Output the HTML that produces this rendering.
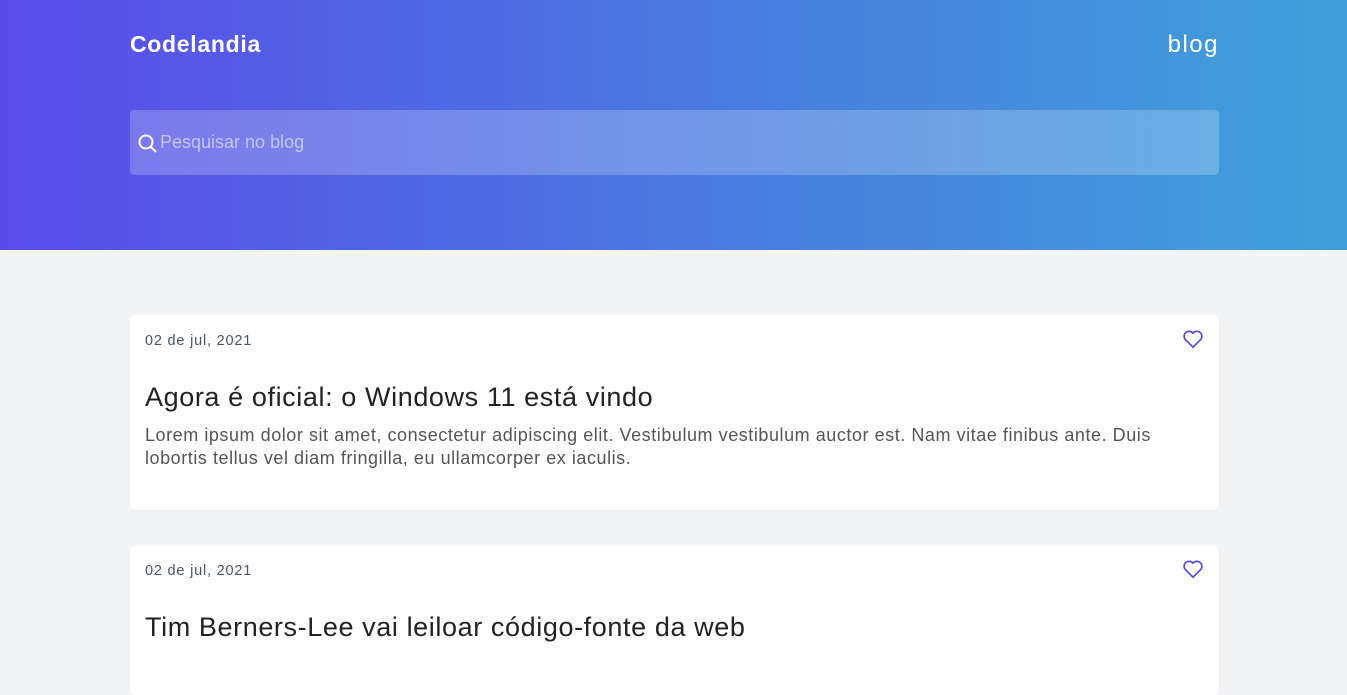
<!DOCTYPE html>
<html><head><meta charset="utf-8"><style>
*{margin:0;padding:0;box-sizing:border-box}
body{width:1347px;height:656px;overflow:hidden;background:#f3f4f6;font-family:"Liberation Sans",sans-serif}
header{height:250px;background:linear-gradient(90deg,#5a4be9,#4a78e0 50%,#3fa0d9);position:relative}
.logo{position:absolute;left:130px;top:31px;color:#fff;font-size:23px;font-weight:bold;letter-spacing:0.7px}
.nav{position:absolute;right:128px;top:31px;color:#fff;font-size:24px;letter-spacing:1.5px}
.search{position:absolute;left:130px;top:110px;width:1089px;height:65px;background:rgba(255,255,255,0.22);border-radius:4px}
.search svg{position:absolute;left:7px;top:23px}
.search span{position:absolute;left:30px;top:22px;color:rgba(255,255,255,0.55);font-size:18px}
.card{position:absolute;left:130px;width:1089px;background:#fff;border-radius:5px;box-shadow:0 1px 2px rgba(0,0,0,0.05)}
.date{position:absolute;left:15px;top:18px;font-size:14.5px;color:#4b5563;letter-spacing:0.8px}
.heart{position:absolute;right:15px;top:14px}
h2{position:absolute;left:15px;top:67px;font-size:27px;font-weight:normal;color:#222;letter-spacing:0.6px;white-space:nowrap}
p{position:absolute;left:15px;top:109px;width:1040px;font-size:18px;line-height:23px;color:#555;letter-spacing:0.55px}
</style></head><body>
<header>
<div class="logo">Codelandia</div>
<div class="nav">blog</div>
<div class="search"><svg width="22" height="22" viewBox="0 0 22 22" fill="none" stroke="#fff" stroke-width="2"><circle cx="9" cy="9" r="6.5"/><line x1="13.8" y1="13.8" x2="19" y2="19"/></svg><span>Pesquisar no blog</span></div>
</header>
<div class="card" style="top:315px;height:195px">
<div class="date">02 de jul, 2021</div>
<svg class="heart" width="22" height="20" viewBox="0 0 24 22" fill="none" stroke="#5145e5" stroke-width="1.8"><path d="M12 20 L3.5 11.5 A5 5 0 0 1 12 4.5 A5 5 0 0 1 20.5 11.5 Z"/></svg>
<h2>Agora é oficial: o Windows 11 está vindo</h2>
<p>Lorem ipsum dolor sit amet, consectetur adipiscing elit. Vestibulum vestibulum auctor est. Nam vitae finibus ante. Duis lobortis tellus vel diam fringilla, eu ullamcorper ex iaculis.</p>
</div>
<div class="card" style="top:545px;height:150px">
<div class="date">02 de jul, 2021</div>
<svg class="heart" width="22" height="20" viewBox="0 0 24 22" fill="none" stroke="#5145e5" stroke-width="1.8"><path d="M12 20 L3.5 11.5 A5 5 0 0 1 12 4.5 A5 5 0 0 1 20.5 11.5 Z"/></svg>
<h2>Tim Berners-Lee vai leiloar código-fonte da web</h2>
</div>
</body></html>
